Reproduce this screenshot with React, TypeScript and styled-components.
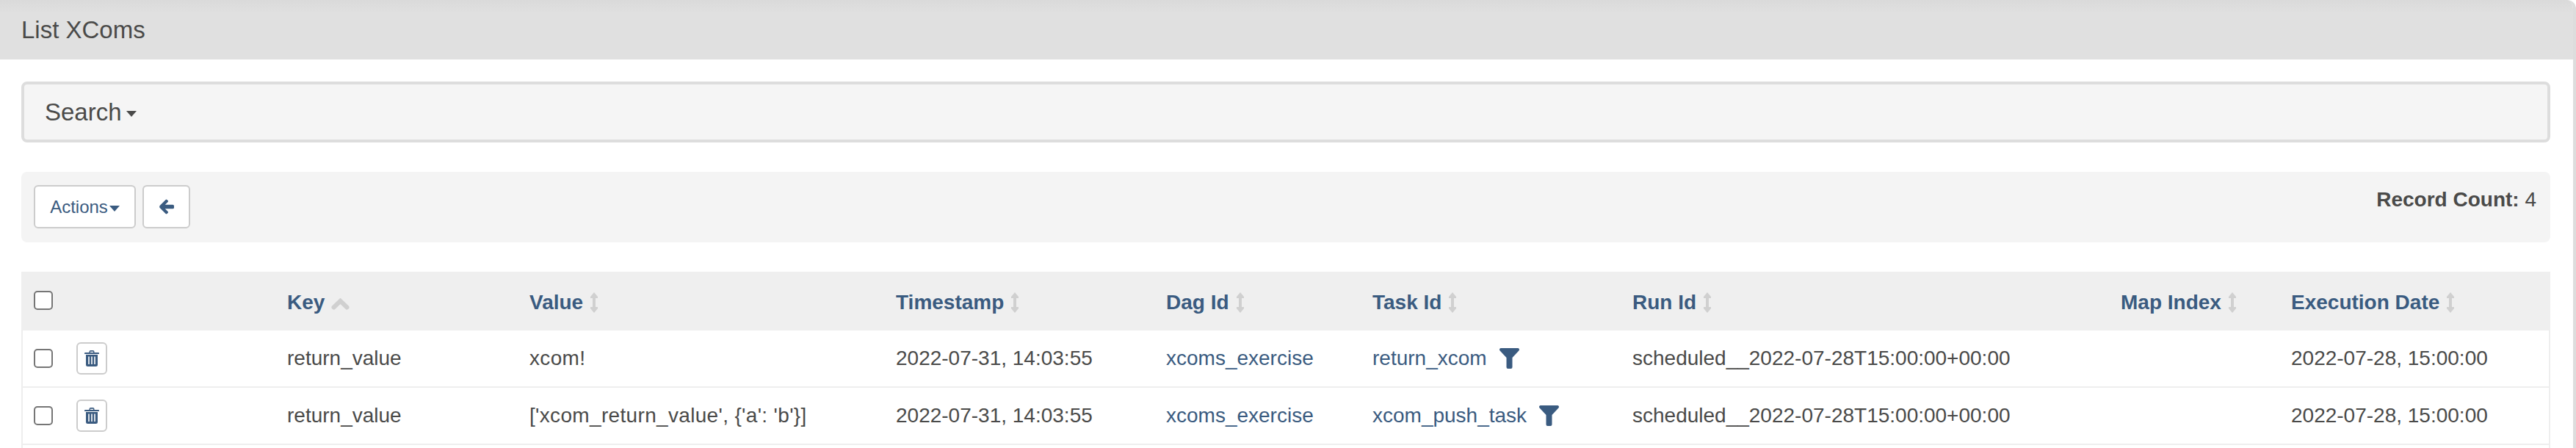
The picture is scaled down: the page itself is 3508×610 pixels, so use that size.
import React from "react";
import styled, { createGlobalStyle } from "styled-components";

const GlobalStyle = createGlobalStyle`
  html, body { margin: 0; padding: 0; background: #fff; overflow: hidden; }
  body { font-family: "Liberation Sans", Arial, sans-serif; color: #4a4a49; font-size: 28px; line-height: 40px; }
  * { box-sizing: border-box; }
`;

const LINK = "#3a5b80";
const MUTED = "#d0d0d0";

const Panel = styled.section`
  width: 3508px;
  height: 610px;
  overflow: hidden;
  border-right: 4px solid #ddd;
  border-top-right-radius: 12px;
`;
const PanelHeader = styled.header`
  height: 81px;
  display: flex;
  align-items: center;
  padding-left: 29px;
  background: linear-gradient(#dadada, #e0e0e0 18px);
  font-size: 33px;
  color: #4a4a49;
`;
const PanelBody = styled.div`
  padding: 30px 31px 0 29px;
`;
const SearchBox = styled.div`
  height: 83px;
  display: flex;
  align-items: center;
  padding-left: 28px;
  margin-bottom: 40px;
  border: 4px solid #ddd;
  border-radius: 8px;
  background: #f5f5f5;
  font-size: 33px;
`;
const Caret = styled.span<{ $w: number; $h: number; $gap: number; $color: string }>`
  display: inline-block;
  width: 0;
  height: 0;
  margin-left: ${(p) => p.$gap}px;
  margin-top: 4px;
  border-left: ${(p) => p.$w / 2}px solid transparent;
  border-right: ${(p) => p.$w / 2}px solid transparent;
  border-top: ${(p) => p.$h}px solid ${(p) => p.$color};
`;
const Well = styled.div`
  height: 96px;
  margin-bottom: 40px;
  padding: 18px 19px 0 17px;
  display: flex;
  justify-content: space-between;
  align-items: flex-start;
  background: #f4f4f4;
  border-radius: 8px;
`;
const ButtonRow = styled.div`
  display: flex;
  gap: 9px;
`;
const Button = styled.button<{ $w: number; $h: number }>`
  width: ${(p) => p.$w}px;
  height: ${(p) => p.$h}px;
  display: inline-flex;
  align-items: center;
  justify-content: center;
  padding: 0;
  background: #fff;
  border: 2px solid #ccc;
  border-radius: 6px;
  color: ${LINK};
  font: 24px "Liberation Sans", Arial, sans-serif;
`;
const RecordCount = styled.div`
  font-size: 28px;
  line-height: 40px;
  b { font-weight: 700; }
`;
const Table = styled.table`
  width: 3444px;
  table-layout: fixed;
  border-collapse: separate;
  border-spacing: 0;
`;
const HeadCell = styled.th`
  height: 80px;
  padding: 22px 16px 18px;
  background: #efefef;
  text-align: left;
  font-weight: 700;
  white-space: nowrap;
  vertical-align: top;
  &:first-child { padding: 26px 0 0 17px; }
`;
const SortLabel = styled.span`
  display: inline-flex;
  align-items: center;
  color: ${LINK};
  line-height: 40px;
`;
const SortIcon = styled.svg`
  margin-left: 10px;
  fill: ${MUTED};
  flex: none;
`;
const ChevronIcon = styled.svg`
  margin-left: 9px;
  margin-top: 4px;
  fill: none;
  stroke: ${MUTED};
  stroke-width: 6;
  stroke-linecap: round;
  stroke-linejoin: miter;
`;
const Cell = styled.td`
  height: 78px;
  padding: 0 16px;
  border-bottom: 2px solid #eee;
  white-space: nowrap;
  vertical-align: middle;
  &:first-child { border-left: 2px solid #eee; padding-left: 15px; }
  &:last-child { border-right: 2px solid #eee; }
`;
const CheckBox = styled.input.attrs({ type: "checkbox" })`
  appearance: none;
  display: block;
  width: 26px;
  height: 26px;
  margin: 0;
  background: #fff;
  border: 2px solid #767676;
  border-radius: 5px;
`;
const ValueText = styled.span`
  letter-spacing: 0.33px;
`;
const TaskLink = styled.span`
  display: inline-flex;
  align-items: center;
  color: ${LINK};
`;
const LinkText = styled.span`
  color: ${LINK};
`;
const FilterIcon = styled.svg`
  margin-left: 17px;
  margin-top: -1px;
  fill: ${LINK};
`;
const GlyphIcon = styled.svg`
  fill: ${LINK};
`;

const Sort = () => (
  <SortIcon width="10" height="28" viewBox="0 0 10 28">
    <path d="M5 0 L10 6 V8 H7 V20 H10 V22 L5 28 L0 22 V20 H3 V8 H0 V6 Z" />
  </SortIcon>
);
const Chevron = () => (
  <ChevronIcon width="25" height="16" viewBox="0 0 25 16">
    <path d="M3.5 12.5 L12.5 3.8 L21.5 12.5" />
  </ChevronIcon>
);
const Filter = () => (
  <FilterIcon width="27" height="28" viewBox="0 0 27 28">
    <path d="M2 0 H25 A2 2 0 0 1 26.4 3.4 L17.5 13 V26 A2 2 0 0 1 15.5 28 H11.5 A2 2 0 0 1 9.5 26 V13 L0.6 3.4 A2 2 0 0 1 2 0 Z" />
  </FilterIcon>
);
const Trash = () => (
  <GlyphIcon width="20" height="22" viewBox="0 0 20 22">
    <path
      fillRule="evenodd"
      d="M6.5 3 V2 Q6.5 0 8.5 0 H11.5 Q13.5 0 13.5 2 V3 H19 Q20 3 20 4 V5 H0 V4 Q0 3 1 3 Z M8 3 H12 V1.7 H8 Z M2 6 H18 V19.5 Q18 22 15.5 22 H4.5 Q2 22 2 19.5 Z M5.2 8.5 V19 H6.8 V8.5 Z M9.2 8.5 V19 H10.8 V8.5 Z M13.2 8.5 V19 H14.8 V8.5 Z"
    />
  </GlyphIcon>
);
const ArrowLeft = () => (
  <GlyphIcon width="20" height="21" viewBox="0 0 20 21">
    <path d="M0.6 9.1 L8.6 0.9 Q9.5 0 10.4 0.9 L11.6 2.1 Q12.5 3 11.6 3.9 L7.8 7.7 H18.3 Q20 7.7 20 9.2 V11.8 Q20 13.3 18.3 13.3 H7.8 L11.6 17.1 Q12.5 18 11.6 18.9 L10.4 20.1 Q9.5 21 8.6 20.1 L0.6 11.9 Q-0.2 10.5 0.6 9.1 Z" />
  </GlyphIcon>
);

const columnWidths = [59, 287, 330, 499, 368, 281, 354, 665, 232, 369];
const headers = ["Value", "Timestamp", "Dag Id", "Task Id", "Run Id", "Map Index", "Execution Date"];
const rows = [
  { key: "return_value", value: "xcom!", task: "return_xcom" },
  { key: "return_value", value: "['xcom_return_value', {'a': 'b'}]", task: "xcom_push_task" },
];

export default function App() {
  return (
    <>
      <GlobalStyle />
      <Panel>
        <PanelHeader>List XComs</PanelHeader>
        <PanelBody>
          <SearchBox>
            Search
            <Caret $w={14} $h={8} $gap={6} $color="#4a4a49" />
          </SearchBox>
          <Well>
            <ButtonRow>
              <Button $w={139} $h={59}>
                Actions
                <Caret $w={14} $h={8} $gap={2} $color={LINK} />
              </Button>
              <Button $w={65} $h={59}>
                <ArrowLeft />
              </Button>
            </ButtonRow>
            <RecordCount>
              <b>Record Count:</b> 4
            </RecordCount>
          </Well>
          <Table>
            <colgroup>
              {columnWidths.map((w, i) => (
                <col key={i} width={w} />
              ))}
            </colgroup>
            <thead>
              <tr>
                <HeadCell>
                  <CheckBox />
                </HeadCell>
                <HeadCell />
                <HeadCell>
                  <SortLabel>
                    Key
                    <Chevron />
                  </SortLabel>
                </HeadCell>
                {headers.map((h) => (
                  <HeadCell key={h}>
                    <SortLabel>
                      {h}
                      <Sort />
                    </SortLabel>
                  </HeadCell>
                ))}
              </tr>
            </thead>
            <tbody>
              {rows.map((r) => (
                <tr key={r.task}>
                  <Cell>
                    <CheckBox />
                  </Cell>
                  <Cell>
                    <Button $w={42} $h={44}>
                      <Trash />
                    </Button>
                  </Cell>
                  <Cell>{r.key}</Cell>
                  <Cell>
                    <ValueText>{r.value}</ValueText>
                  </Cell>
                  <Cell>2022-07-31, 14:03:55</Cell>
                  <Cell>
                    <LinkText>xcoms_exercise</LinkText>
                  </Cell>
                  <Cell>
                    <TaskLink>
                      {r.task}
                      <Filter />
                    </TaskLink>
                  </Cell>
                  <Cell>scheduled__2022-07-28T15:00:00+00:00</Cell>
                  <Cell />
                  <Cell>2022-07-28, 15:00:00</Cell>
                </tr>
              ))}
              <tr>
                {columnWidths.map((_, i) => (
                  <Cell key={i} />
                ))}
              </tr>
            </tbody>
          </Table>
        </PanelBody>
      </Panel>
    </>
  );
}
